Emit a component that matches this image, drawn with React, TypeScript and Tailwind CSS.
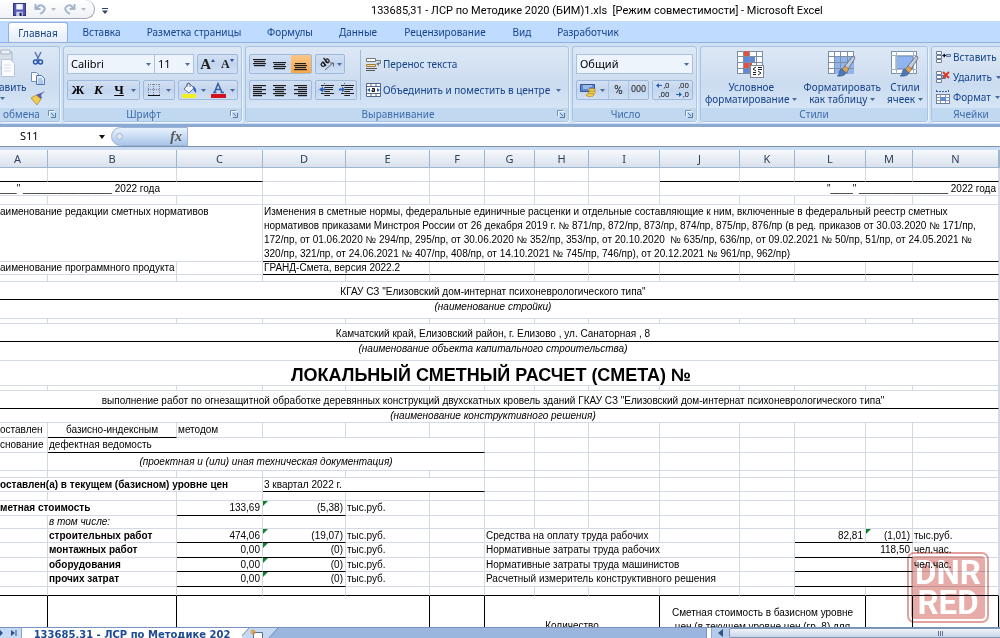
import React from "react";

const box = "flex rounded-[2px] border border-[#9db9dc] bg-gradient-to-b from-[#d3e0f2] via-[#c3d5ee] to-[#cfe0f5]";
const ui = "font-['Noto_Sans',sans-serif]";

function Arrow({ className = "" }: { className?: string }) {
  return (
    <svg viewBox="0 0 5 3" className={"h-[3px] w-[5px] shrink-0 " + className} aria-hidden="true">
      <path d="M0 0h5L2.500 3z" fill="#4a6c9c" />
    </svg>
  );
}

function Launcher() {
  return (
    <button aria-label="Параметры" className="absolute right-[3px] bottom-[3px] h-2 w-2">
      <svg viewBox="0 0 8 8" className="h-2 w-2">
        <path d="M1.500 7V1.500H7" fill="none" stroke="#fff" strokeOpacity=".8" />
        <path d="M.5 6V.5H6" fill="none" stroke="#7590b5" />
        <path d="M3 3l3 3M7.500 3v4.500H3" fill="none" stroke="#58759f" />
      </svg>
    </button>
  );
}

type GroupProps = { label: string; width: string; labelPad?: string; launcher?: boolean; children: React.ReactNode };

function Group({ label, width, labelPad = "", launcher, children }: GroupProps) {
  return (
    <section className={"relative flex shrink-0 flex-col overflow-hidden rounded-[3px] border border-[#a9c3e2] bg-gradient-to-b from-[#dde8f5] via-[#ccdcf0] to-[#dae9fa] shadow-[1px_1px_0_#eef5fd] " + width}>
      <div className="min-h-0 flex-1">{children}</div>
      <h2 className={"h-[13px] bg-[#c1d8f1] text-center text-[10px] leading-[13px] text-[#3f6cab] " + labelPad}>{label}</h2>
      {launcher && <Launcher />}
    </section>
  );
}

function Lines({ rows }: { rows: [number, number, number][] }) {
  return (
    <svg viewBox="0 0 14 13" className="h-[13px] w-[14px]" aria-hidden="true">
      {rows.map(([x, y, w]) => (
        <g key={y}>
          <rect x={x} y={y} width={w} height="1" fill="#1c1c1c" />
          <rect x={x} y={y + 1} width={w} height="1" fill="#5d6675" fillOpacity=".35" />
        </g>
      ))}
    </svg>
  );
}

const topLines: [number, number, number][] = [[0, 1, 13], [1, 3, 11], [0, 5, 13], [1, 7, 11]];
const midLines: [number, number, number][] = [[0, 4, 13], [1, 6, 11], [0, 8, 13], [1, 10, 11]];
const lowLines: [number, number, number][] = [[1, 5, 11], [0, 7, 13], [1, 9, 11], [0, 11, 13]];
const leftLines: [number, number, number][] = [[0, 1, 13], [0, 3, 9], [0, 5, 13], [0, 7, 9], [0, 9, 13], [0, 11, 9]];
const centerLines: [number, number, number][] = [[0, 1, 13], [2, 3, 9], [0, 5, 13], [2, 7, 9], [0, 9, 13], [2, 11, 9]];
const rightLines: [number, number, number][] = [[0, 1, 13], [4, 3, 9], [0, 5, 13], [4, 7, 9], [0, 9, 13], [4, 11, 9]];

function Indent({ out }: { out?: boolean }) {
  return (
    <svg viewBox="0 0 15 14" className="h-[14px] w-[15px]" aria-hidden="true">
      <path d="M2 2.500h13M6 4.500h8M6 6.500h8M6 8.500h5M2 10.500h13M6 12.500h5" stroke="#222" fill="none" />
      <path d={out ? "M0 6.500l4-3v2h2v2H4v2z" : "M6 6.500l-3-3v2H0v2h3v2z"} fill="#2d62b8" />
      <path d="M5.500 0v14" stroke="#555" strokeDasharray="1 1" />
    </svg>
  );
}

function Brush({ x, y }: { x: number; y: number }) {
  return (
    <g transform={"translate(" + x + " " + y + ")"}>
      <path d="M16 0q3 0 1 4L11 13l-4-2z" fill="#c3ccd9" stroke="#566277" strokeWidth=".8" />
      <path d="M8 10l4 3-3 4-4-3z" fill="#d9a45c" stroke="#7d5c30" strokeWidth=".6" />
      <path d="M5 13l4 4q-2 4-9 3 3-2 2-4 1-3 3-3z" fill="#4c76b4" stroke="#3a5681" strokeWidth=".5" />
    </g>
  );
}

function GridIcon({ kind }: { kind: "cond" | "table" | "cell" }) {
  return (
    <svg viewBox="0 0 28 28" className="h-7 w-7" aria-hidden="true">
      <rect x=".5" y="1.500" width="25" height="22" fill="#fff" stroke="#7d8ea8" />
      {kind === "cond" && (
        <g>
          <path d="M7 1h6v6H7zM7 12h8v6H7z" fill="#e0523f" />
          <path d="M7 7h11v5H7zM7 18h6v5H7z" fill="#5c87dc" />
        </g>
      )}
      {kind === "table" && <path d="M7 7h19v17H7z" fill="#8fb4ee" />}
      {kind === "cell" ? (
        <g>
          <path d="M5 6h17v13H5z" fill="#8fb4ee" stroke="#6a8bc4" />
          <path d="M5.500 1v23M22.500 1v23M0 5.500h26M0 19.500h26" stroke="#a6b3c6" fill="none" />
        </g>
      ) : (
        <path d="M6.500 1v23M12.500 1v23M19.500 1v23M0 6.500h26M0 12.500h26M0 18.500h26" stroke="#7d8ea8" fill="none" />
      )}
      {kind === "cond" ? (
        <g>
          <rect x="13.500" y="15.500" width="13" height="12" fill="#fff" stroke="#7c8796" />
          <path d="M19 17l-3 2 3 2M16 22.500h3M16 24.500h3M21 17.500h4M21 19.500h4M21 21l3 2-3 2" stroke="#222" fill="none" />
        </g>
      ) : (
        <Brush x={9} y={6} />
      )}
    </svg>
  );
}

function CellsIcon({ kind }: { kind: "insert" | "delete" | "format" }) {
  return (
    <svg viewBox="0 0 15 14" className="h-[14px] w-[15px] shrink-0" aria-hidden="true">
      {kind === "format" ? (
        <g>
          <path d="M0 1.500h13M.5 0v3M12.500 0v3" stroke="#3a5f99" fill="none" strokeDasharray="2 1" />
          <rect x=".5" y="4.500" width="13" height="9" fill="#fff" stroke="#6d7f99" />
          <path d="M4.500 4v9M9.500 4v9M0 7.500h14M0 10.500h14" stroke="#8796ad" />
          <rect x="5" y="7" width="5" height="4" fill="#5d8bdd" />
        </g>
      ) : (
        <g>
          <path d="M.5 1.500h5v3h-5zM.5 9.500h5v3h-5zM.5 5.500h5v3h-5z" fill="#fff" stroke="#6d7f99" />
          {kind === "insert" ? (
            <g>
              <path d="M6 5.500l3-2v1.500h2v1H9v1.500z" fill="#111" />
              <path d="M10.500 4.500h4v2h-4z" fill="#b8cff2" stroke="#5878ab" />
            </g>
          ) : (
            <g>
              <path d="M5.500 5.500h4v3h-4z" fill="#8fb4ee" stroke="#5878ab" />
              <path d="M7 2l6 6M13 2L7 8" stroke="#dd3a22" strokeWidth="2" />
            </g>
          )}
        </g>
      )}
    </svg>
  );
}

function TitleBar() {
  return (
    <header className="relative flex h-[21px] shrink-0 items-center bg-white">
      <div className="-ml-2 flex h-[19px] w-[103px] items-center self-start rounded-r-full border border-t-0 border-[#a0a6b0] bg-gradient-to-b from-white to-[#eef1f6] pl-5">
        <button aria-label="Сохранить" className="h-[13px] w-[13px]">
          <svg viewBox="0 0 12 12" className="h-[13px] w-[13px]">
            <path d="M.5.500h11v11H.5z" fill="#5558b8" stroke="#34367f" />
            <path d="M3 1h6v5H3z" fill="#f4f6ff" />
            <path d="M3 8h6v4H3z" fill="#c9cfe6" />
            <path d="M6 9h2v3H6z" fill="#23245f" />
          </svg>
        </button>
        <button aria-label="Отменить" className="ml-2 flex items-center gap-[5px]">
          <svg viewBox="0 0 12 12" className="h-3 w-3">
            <path d="M1.500 1v5h5M2.500 5.500Q6 0 9.500 3.500T6 11" fill="none" stroke="#9fb2d0" strokeWidth="2" />
          </svg>
          <svg viewBox="0 0 5 3" className="h-[3px] w-[5px]"><path d="M0 0h5L2.500 3z" fill="#b4bcc9" /></svg>
        </button>
        <button aria-label="Вернуть" className="ml-2 flex items-center gap-[5px]">
          <svg viewBox="0 0 12 12" className="h-3 w-3">
            <path d="M10.500 1v5h-5M9.500 5.500Q6 0 2.500 3.500T6 11" fill="none" stroke="#a7b6cd" strokeWidth="2" />
          </svg>
          <svg viewBox="0 0 5 3" className="h-[3px] w-[5px]"><path d="M0 0h5L2.500 3z" fill="#b4bcc9" /></svg>
        </button>
      </div>
      <button aria-label="Настройка панели" className="ml-[7px] h-[6px] w-[6px]">
        <svg viewBox="0 0 6 6" className="h-[6px] w-[6px]"><path d="M0 0h6v1H0zM0 2.500h6L3 6z" fill="#2c4468" /></svg>
      </button>
      <h1 className="min-w-0 flex-1 pl-[263px] font-['Roboto',sans-serif] text-[11px] leading-5 whitespace-pre text-black">133685,31 - ЛСР по Методике 2020 (БИМ)1.xls  [Режим совместимости] - Microsoft Excel</h1>
    </header>
  );
}

const tabs: [string, string][] = [
  ["Главная", "w-[60px]"],
  ["Вставка", "w-[67px]"],
  ["Разметка страницы", "w-[118px]"],
  ["Формулы", "w-[74px]"],
  ["Данные", "w-[62px]"],
  ["Рецензирование", "w-[112px]"],
  ["Вид", "w-[42px]"],
  ["Разработчик", "w-[90px]"],
];

function Tabs() {
  return (
    <nav className="flex h-[21px] shrink-0 items-end bg-[#bfdbff] pl-2">
      {tabs.map(([t, w], i) => (
        <button
          key={t}
          className={
            "shrink-0 text-center text-[10px] leading-[18px] whitespace-nowrap text-[#15428b] " + w +
            (i === 0 ? " h-5 rounded-t-[3px] border border-b-0 border-[#8fb0dc] bg-gradient-to-b from-white to-[#e3ecf8]" : " h-5")
          }
        >
          {t}
        </button>
      ))}
    </nav>
  );
}

function Ribbon() {
  const btn = "flex items-center justify-center";
  const field = "flex items-center justify-between border border-[#abc1de] bg-[#eef4fc] px-[3px] text-[11px] text-black";
  return (
    <div className="flex h-[82px] shrink-0 gap-[3px] overflow-hidden border-t border-[#8db2e3] bg-[#cfe0f5] pt-[3px] pb-[2px] text-[#15428b]">
      <Group label="обмена" width="w-[61px] -ml-px border-l-0" labelPad="pr-[15px]" launcher>
        <div className="flex h-full justify-between pr-[14px]">
          <button className="flex flex-col items-start text-[10px] leading-3">
            <svg viewBox="0 0 16 32" className="mb-[2px] h-8 w-4" aria-hidden="true">
              <path d="M0 5h13v16H0z" fill="#d9dfe8" stroke="#a9b5c7" />
              <path d="M2 3h9v4H2z" fill="#eef2f7" stroke="#a9b5c7" />
              <path d="M2.500 12.500h9l4 4v13h-13z" fill="#fafcff" stroke="#b8c4d8" />
              <path d="M5 18h7M5 21h7M5 24h7" stroke="#d2dbe8" />
            </svg>
            авить
            <Arrow className="mt-[4px] ml-px" />
          </button>
          <div className="flex flex-col items-center gap-[6px] pt-1">
            <button aria-label="Вырезать">
              <svg viewBox="0 0 14 14" className="h-[14px] w-[14px]">
                <path d="M4 1l4 8M10 1L6 9" stroke="#5c79ae" strokeWidth="1.500" />
                <circle cx="4.500" cy="11" r="2" fill="none" stroke="#2b57ad" strokeWidth="1.500" />
                <circle cx="9.500" cy="11" r="2" fill="none" stroke="#2b57ad" strokeWidth="1.500" />
              </svg>
            </button>
            <button aria-label="Копировать">
              <svg viewBox="0 0 14 14" className="h-[14px] w-[14px]">
                <path d="M.5 1.500h5l3 3v6h-8z" fill="#fff" stroke="#6f8dbf" />
                <path d="M5.500 4.500h5l3 3v6h-8z" fill="#e4eefc" stroke="#4f76b5" />
                <path d="M7 8h4M7 10h5M7 12h5" stroke="#7ea0d8" />
              </svg>
            </button>
            <button aria-label="Формат по образцу">
              <svg viewBox="0 0 14 14" className="h-[14px] w-[14px]">
                <path d="M14 0l-4 4 1 3-2 1-4-4 2-1 3-1z" fill="#5262a5" />
                <path d="M5 4l5 4-4 6-6-7z" fill="#f0cb55" stroke="#a5832c" strokeWidth=".7" />
              </svg>
            </button>
          </div>
        </div>
      </Group>

      <Group label="Шрифт" width="w-[179px]" labelPad="pr-[18px]" launcher>
        <div className="flex flex-col gap-[6px] px-[3px] pt-[7px]">
          <div className="flex h-5 gap-[3px]">
            <div className="flex">
              <button className={field + " w-[88px]"}>Calibri<Arrow /></button>
              <button className={field + " -ml-px w-10"}>11<Arrow /></button>
            </div>
            <div className={box + " flex-1 font-['Liberation_Serif',serif] font-bold text-[#222]"}>
              <button className={btn + " flex-1 text-[15px]"} aria-label="Увеличить размер">
                A<svg viewBox="0 0 4 3" className="mb-2 h-[3px] w-1"><path d="M0 3h4L2 0z" fill="#2450a0" /></svg>
              </button>
              <button className={btn + " flex-1 text-[12px]"} aria-label="Уменьшить размер">
                A<svg viewBox="0 0 4 3" className="mb-2 h-[3px] w-1"><path d="M0 0h4L2 3z" fill="#2450a0" /></svg>
              </button>
            </div>
          </div>
          <div className="flex h-5 gap-[3px]">
            <div className={box + " w-[73px] items-center font-['Liberation_Serif',serif] text-[13px] font-bold text-black"}>
              <button className="w-5">Ж</button>
              <button className="w-[21px] italic">К</button>
              <button className="w-5 underline">Ч</button>
              <Arrow className="ml-[2px]" />
            </div>
            <button className={box + " w-8 items-center justify-center gap-[6px]"} aria-label="Границы">
              <svg viewBox="0 0 12 12" className="h-3 w-3">
                <path d="M.5 0v11M5.500 0v11M11.500 0v11M0 .5h12M0 5.500h12" stroke="#7b8798" strokeDasharray="1 1" fill="none" />
                <path d="M0 11.500h12" stroke="#111" />
              </svg>
              <Arrow />
            </button>
            <div className={box + " flex-1"}>
              <button className={btn + " flex-1 gap-1"} aria-label="Цвет заливки">
                <svg viewBox="0 0 15 16" className="h-4 w-[15px]">
                  <path d="M7 1l5 5-5 5-5-4z" fill="#f1f5fb" stroke="#5d7192" />
                  <path d="M5 5V2q1-2 3 0v3" fill="none" stroke="#5d7192" />
                  <path d="M11 4q4 2 3 7-2-1-3-5z" fill="#2e63b9" />
                  <rect y="12" width="14" height="4" fill="#f4ee1e" />
                </svg>
                <Arrow />
              </button>
              <button className={btn + " flex-1 gap-1"} aria-label="Цвет текста">
                <svg viewBox="0 0 15 16" className="h-4 w-[15px]">
                  <path d="M3.500 10.500L7 1.500l4 9M5 7.500h5M2 10.500h3.500M9.500 10.500h3.500" fill="none" stroke="#3b5fa3" strokeWidth="1.500" />
                  <rect y="12" width="15" height="4" fill="#d4121e" />
                </svg>
                <Arrow />
              </button>
            </div>
          </div>
        </div>
      </Group>

      <Group label="Выравнивание" width="w-[324px]" labelPad="pr-[18px]" launcher>
        <div className="flex gap-[5px] px-[3px] pt-[7px]">
          <div className="flex flex-col gap-[6px]">
            <div className="flex h-5 gap-[3px]">
              <div className={box + " w-[63px]"}>
                <button className={btn + " flex-1"} aria-label="По верхнему краю"><Lines rows={topLines} /></button>
                <button className={btn + " flex-1"} aria-label="По середине"><Lines rows={midLines} /></button>
                <button className={btn + " flex-1 bg-gradient-to-b from-[#f9c787] to-[#fba53a]"} aria-label="По нижнему краю"><Lines rows={lowLines} /></button>
              </div>
              <button className={box + " w-[30px] items-center justify-center gap-[2px]"} aria-label="Ориентация">
                <svg viewBox="0 0 16 14" className="h-[14px] w-4">
                  <ellipse cx="4" cy="7.500" rx="1.700" ry="2" fill="none" stroke="#222" strokeWidth="1.300" transform="rotate(-45 4 7.500)" />
                  <path d="M3.500 4.500L7 9" stroke="#222" strokeWidth="1.300" />
                  <path d="M4.500 1L9 6" stroke="#222" strokeWidth="1.300" />
                  <ellipse cx="8.300" cy="3.800" rx="1.700" ry="2" fill="none" stroke="#222" strokeWidth="1.300" transform="rotate(-45 8.300 3.800)" />
                  <path d="M6 13l8-7M11 6h3.500v3.500" fill="none" stroke="#666" />
                </svg>
                <Arrow />
              </button>
            </div>
            <div className="flex h-5 gap-[3px]">
              <div className={box + " w-[63px]"}>
                <button className={btn + " flex-1"} aria-label="По левому краю"><Lines rows={leftLines} /></button>
                <button className={btn + " flex-1"} aria-label="По центру"><Lines rows={centerLines} /></button>
                <button className={btn + " flex-1"} aria-label="По правому краю"><Lines rows={rightLines} /></button>
              </div>
              <div className={box + " w-[42px]"}>
                <button className={btn + " flex-1"} aria-label="Уменьшить отступ"><Indent out /></button>
                <button className={btn + " flex-1"} aria-label="Увеличить отступ"><Indent /></button>
              </div>
            </div>
          </div>
          <div className="-mt-1 -ml-[2px] w-px bg-[#9fbadb]" />
          <div className="flex flex-col gap-[6px] text-[10px] whitespace-nowrap">
            <button className="flex h-5 items-center gap-[2px]">
              <svg viewBox="0 0 15 14" className="h-[14px] w-[15px]" aria-hidden="true">
                <path d="M.5 1.500h9v3h-9z" fill="#fff" stroke="#777" />
                <path d="M10 3.500h4.500v3H11" fill="none" stroke="#777" />
                <path d="M13 5l-3 2 3 2z" fill="#777" />
                <path d="M.5 7.500h9v2h-9z" fill="#f3d9a8" stroke="#a07a3c" />
                <path d="M0 11.500h11M0 13.500h9" stroke="#555" />
              </svg>
              Перенос текста
            </button>
            <button className="flex h-5 items-center gap-[2px]">
              <svg viewBox="0 0 15 14" className="h-[14px] w-[15px]" aria-hidden="true">
                <path d="M.5.500h14v13H.5zM.5 3.500h14M.5 10.500h14M5 .5v3M10 .5v3M5 10v4M10 10v4" fill="#fff" stroke="#53698c" />
                <path d="M1 7l3-2v4zM14 7l-3-2v4z" fill="#2a5db4" />
                <path d="M6 5.500h2.500v3H6V7h2.500" fill="none" stroke="#111" />
              </svg>
              Объединить и поместить в центре
              <Arrow className="ml-1" />
            </button>
          </div>
        </div>
      </Group>

      <Group label="Число" width="w-[125px]" labelPad="pr-[18px]" launcher>
        <div className="flex flex-col gap-[6px] px-[3px] pt-[7px]">
          <button className={field + " h-5"}>Общий<Arrow /></button>
          <div className="flex h-5 gap-[3px] text-[#222]">
            <div className={box + " w-[73px]"}>
              <button className={btn + " w-[31px] gap-1"} aria-label="Денежный формат">
                <svg viewBox="0 0 16 14" className="h-[14px] w-4">
                  <path d="M.5 1.500h14v7H.5z" fill="#5d88cf" stroke="#2f5596" />
                  <path d="M3 3h9M3 5h6" stroke="#dbe7fb" />
                  <ellipse cx="12" cy="7" rx="3.500" ry="1.500" fill="#f6d35a" stroke="#a37a16" strokeWidth=".6" />
                  <ellipse cx="12" cy="9.500" rx="3.500" ry="1.500" fill="#f6d35a" stroke="#a37a16" strokeWidth=".6" />
                  <ellipse cx="10" cy="12" rx="4" ry="1.500" fill="#f6d35a" stroke="#a37a16" strokeWidth=".6" />
                </svg>
                <Arrow />
              </button>
              <button className={btn + " w-5 border-l border-[#aac3e3] font-['Roboto',sans-serif] text-[12px]"}>%</button>
              <button className={btn + " flex-1 border-l border-[#aac3e3] font-['Roboto',sans-serif] text-[9px]"}>000</button>
            </div>
            <div className={box + " flex-1 font-['Roboto',sans-serif] text-[8px] leading-[9px]"}>
              <button className="flex flex-1 flex-col items-end pr-[3px]" aria-label="Увеличить разрядность">
                <span className="flex items-center gap-px"><svg viewBox="0 0 6 5" className="h-[5px] w-[6px]"><path d="M0 2.500L3 0v2h3v1H3v2z" fill="#2a5db4" /></svg>,0</span>
                <span>,00</span>
              </button>
              <button className="flex flex-1 flex-col items-end pr-[3px]" aria-label="Уменьшить разрядность">
                <span>,00</span>
                <span className="flex items-center gap-px"><svg viewBox="0 0 6 5" className="h-[5px] w-[6px]"><path d="M6 2.500L3 0v2H0v1h3v2z" fill="#2a5db4" /></svg>,0</span>
              </button>
            </div>
          </div>
        </div>
      </Group>

      <Group label="Стили" width="w-[228px]">
        <div className="flex justify-between px-1 pt-[3px] text-center text-[10px] leading-3 whitespace-nowrap">
          {([["cond", "Условное", "форматирование"], ["table", "Форматировать", "как таблицу"], ["cell", "Стили", "ячеек"]] as const).map(([k, a, b]) => (
            <button key={k} className="flex flex-col items-center">
              <GridIcon kind={k} />
              <span className="mt-[3px]">{a}</span>
              <span className="flex items-center gap-[3px]">{b}<Arrow /></span>
            </button>
          ))}
        </div>
      </Group>

      <Group label="Ячейки" width="min-w-[84px] flex-1 -mr-2" labelPad="pr-1">
        <div className="flex flex-col items-start px-1 text-[10px] whitespace-nowrap">
          {([["insert", "Вставить"], ["delete", "Удалить"], ["format", "Формат"]] as const).map(([k, t]) => (
            <button key={k} className="flex h-5 items-center gap-[2px]">
              <CellsIcon kind={k} />
              {t}
              <Arrow className="ml-[2px]" />
            </button>
          ))}
        </div>
      </Group>
    </div>
  );
}

function FormulaBar() {
  return (
    <div className="flex h-[26px] shrink-0 flex-col bg-[#c9dcf4]">
      <div className="h-[3px] shrink-0 bg-[#8ba9d3]" />
      <div className="flex h-5 border-b border-[#7d93ad] bg-white">
        <input aria-label="Имя ячейки" defaultValue="S11" className="w-[99px] bg-white pl-5 text-[11px] text-black outline-none" />
        <button aria-label="Список имён" className="flex w-3 items-center">
          <svg viewBox="0 0 6 4" className="h-1 w-[6px]"><path d="M0 0h6L3 4z" fill="#111" /></svg>
        </button>
        <div className="flex w-[77px] items-center justify-between rounded-l-full border border-[#9cb4d6] bg-gradient-to-b from-[#e9f2fd] to-[#a9c5ea] pr-[5px] pl-1">
          <span className="h-[7px] w-[7px] rounded-full border border-[#a9b8cd] bg-[#dde6f3]" />
          <button className="font-['Liberation_Serif',serif] text-[14px] leading-4 font-bold text-[#555] italic">fx</button>
        </div>
        <input aria-label="Строка формул" className="min-w-0 flex-1 bg-white outline-none" />
      </div>
    </div>
  );
}

type Cell = { t?: React.ReactNode; s?: number; c?: string; mark?: boolean };
type Row = { h: string; cells: Cell[] };

const K = "border-b-black ";
const e = (n: number, c = ""): Cell[] => Array.from({ length: n }, () => ({ c }));
const R = "text-right pr-[2px] ";
const L = "pl-px ";
const C = "text-center ";
const W = "text-center pr-3 ";
const T = "text-center pr-3 pt-[3px] ";

const rows: Row[] = [
  { h: "h-[14px]", cells: [...e(3, K), ...e(6), ...e(5, K), {}] },
  { h: "h-[14px]", cells: [{ t: '___" ________________ 2022 года', s: 3 }, ...e(6), { t: '"____" ________________ 2022 года', s: 5, c: R }, {}] },
  { h: "h-[9px]", cells: e(15) },
  { h: "h-14", cells: [
    { t: "аименование редакции сметных нормативов", s: 3, c: "align-top leading-[14px] " },
    { t: (<>Изменения в сметные нормы, федеральные единичные расценки и отдельные составляющие к ним, включенные в федеральный реестр сметных<br />нормативов приказами Минстроя России от 26 декабря 2019 г. № 871/пр, 872/пр, 873/пр, 874/пр, 875/пр, 876/пр (в ред. приказов от 30.03.2020 № 171/пр,<br />172/пр, от 01.06.2020 № 294/пр, 295/пр, от 30.06.2020 № 352/пр, 353/пр, от 20.10.2020  № 635/пр, 636/пр, от 09.02.2021 № 50/пр, 51/пр, от 24.05.2021 №<br />320/пр, 321/пр, от 24.06.2021 № 407/пр, 408/пр, от 14.10.2021 № 745/пр, 746/пр), от 20.12.2021 № 961/пр, 962/пр)</>), s: 11, c: K + L + "leading-[14px] " },
    {},
  ] },
  { h: "h-[13px]", cells: [{ t: "аименование программного продукта", s: 2 }, {}, { t: "ГРАНД-Смета, версия 2022.2", s: 2, c: K + L }, ...e(9, K), {}] },
  { h: "h-[7px]", cells: e(15) },
  { h: "h-[18px]", cells: [{ t: 'КГАУ СЗ "Елизовский дом-интернат психоневрологического типа"', s: 14, c: T + K }, {}] },
  { h: "h-[19px]", cells: [{ t: "(наименование стройки)", s: 14, c: W + "italic align-top leading-[14px] " }, {}] },
  { h: "h-[5px]", cells: e(15) },
  { h: "h-[18px]", cells: [{ t: "Камчатский край, Елизовский район, г. Елизово , ул. Санаторная , 8", s: 14, c: T + K }, {}] },
  { h: "h-[19px]", cells: [{ t: "(наименование объекта капитального строительства)", s: 14, c: W + "italic align-top leading-[14px] " }, {}] },
  { h: "h-[25px]", cells: [{ t: "ЛОКАЛЬНЫЙ СМЕТНЫЙ РАСЧЕТ (СМЕТА) №", s: 14, c: "text-center pr-4 pt-[5px] text-[18px] leading-[19px] font-bold " }, {}] },
  { h: "h-[5px]", cells: e(15) },
  { h: "h-[18px]", cells: [{ t: 'выполнение работ по огнезащитной обработке деревянных конструкций двухскатных кровель зданий ГКАУ СЗ "Елизовский дом-интернат психоневрологического типа"', s: 14, c: T + K }, {}] },
  { h: "h-[14px]", cells: [{ t: "(наименование конструктивного решения)", s: 14, c: W + "italic " }, {}] },
  { h: "h-[15px]", cells: [{ t: "оставлен" }, { t: "базисно-индексным", c: C + K }, { t: "методом", c: L }, ...e(12)] },
  { h: "h-[15px]", cells: [{ t: "снование" }, { t: "дефектная ведомость", s: 5, c: K + L }, ...e(9)] },
  { h: "h-[18px]", cells: [{}, { t: "(проектная и (или) иная техническая документация)", s: 5, c: C + "italic " }, ...e(9)] },
  { h: "h-[7px]", cells: e(15) },
  { h: "h-[14px]", cells: [{ t: "оставлен(а) в текущем (базисном) уровне цен", s: 3, c: "font-bold " }, { t: "3 квартал 2022 г.", s: 3, c: K + L }, ...e(9)] },
  { h: "h-[9px]", cells: e(15) },
  { h: "h-[15px]", cells: [{ t: "метная стоимость", s: 2, c: "font-bold " }, { t: "133,69", c: R + K }, { t: "(5,38)", c: R + K, mark: true }, { t: "тыс.руб.", c: L }, ...e(10)] },
  { h: "h-[13px]", cells: [{}, { t: "в том числе:", c: L + "italic " }, ...e(13)] },
  { h: "h-[14px]", cells: [{}, { t: "строительных работ", c: L + "font-bold " }, { t: "474,06", c: R + K }, { t: "(19,07)", c: R + K, mark: true }, { t: "тыс.руб.", c: L }, {}, { t: "Средства на оплату труда рабочих", s: 3, c: L }, ...e(2), { t: "82,81", c: R + K }, { t: "(1,01)", c: R + K, mark: true }, { t: "тыс.руб.", c: L }, {}] },
  { h: "h-[15px]", cells: [{}, { t: "монтажных работ", c: L + "font-bold " }, { t: "0,00", c: R + K }, { t: "(0)", c: R + K, mark: true }, { t: "тыс.руб.", c: L }, {}, { t: "Нормативные затраты труда рабочих", s: 4, c: L }, {}, { t: "118,50", s: 2, c: R + K }, { t: "чел.час.", c: L }, {}] },
  { h: "h-[14px]", cells: [{}, { t: "оборудования", c: L + "font-bold " }, { t: "0,00", c: R + K }, { t: "(0)", c: R + K, mark: true }, { t: "тыс.руб.", c: L }, {}, { t: "Нормативные затраты труда машинистов", s: 4, c: L }, {}, { s: 2, c: K }, { t: "чел.час.", c: L }, {}] },
  { h: "h-[15px]", cells: [{}, { t: "прочих затрат", c: L + "font-bold " }, { t: "0,00", c: R + K }, { t: "(0)", c: R + K, mark: true }, { t: "тыс.руб.", c: L }, {}, { t: "Расчетный измеритель конструктивного решения", s: 4, c: L }, {}, { s: 2, c: K }, {}, {}] },
  { h: "h-[9px]", cells: [...e(14, K), {}] },
  { h: "h-[46px]", cells: [
    ...e(2, "border-r-black "), { s: 3, c: "border-r-black " }, { c: "border-r-black " },
    { t: "Количество", s: 3, c: C + "border-r-black pt-[15px] " },
    { t: (<>Сметная стоимость в базисном уровне<br />цен (в текущем уровне цен (гр. 8) для</>), s: 3, c: C + "border-r-black align-top pt-[10px] leading-[14px] " },
    { c: "border-r-black " }, { c: "border-r-black " }, {},
  ] },
];

const letters = ["A", "B", "C", "D", "E", "F", "G", "H", "I", "J", "K", "L", "M", "N", ""];
const widths = ["w-[48px]", "w-[129px]", "w-[86px]", "w-[83px]", "w-[84px]", "w-[55px]", "w-[50px]", "w-[54px]", "w-[71px]", "w-[80px]", "w-[55px]", "w-[71px]", "w-[47px]", "w-[86px]", ""];

function Sheet() {
  return (
    <main className="relative min-h-0 flex-1 overflow-hidden bg-white">
      <table className="w-full table-fixed border-separate border-spacing-0 font-['Liberation_Sans',Arial,sans-serif] text-[10px] leading-[12px] text-black">
        <colgroup>
          {widths.map((w, i) => (
            <col key={i} className={w} />
          ))}
        </colgroup>
        <thead>
          <tr className="h-[18px]">
            {letters.map((l, i) => (
              <th
                key={i}
                scope="col"
                className={"border-r border-b border-[#9eb6ce] bg-gradient-to-b from-[#f7f9fc] to-[#d9e1ed] p-0 font-['Noto_Sans',sans-serif] text-[11px] leading-4 font-normal text-[#2c3f59] " + (i === 0 ? "pr-3" : "")}
              >
                {l}
              </th>
            ))}
          </tr>
        </thead>
        <tbody>
          {rows.map((r, i) => (
            <tr key={i} className={r.h}>
              {r.cells.map((c, j) => (
                <td
                  key={j}
                  colSpan={c.s ?? 1}
                  className={
                    "relative border-r border-b p-0 whitespace-pre " +
                    (c.c?.includes("border-r-black") ? "" : "border-r-[#d3dae3] ") +
                    (c.c?.includes("border-b-black") ? "" : "border-b-[#d3dae3] ") +
                    (c.c ?? "")
                  }
                >
                  {c.mark && (
                    <svg viewBox="0 0 5 5" className="absolute top-0 left-0 h-[5px] w-[5px]" aria-hidden="true">
                      <path d="M0 0h5L0 5z" fill="#12802a" />
                    </svg>
                  )}
                  {c.t}
                </td>
              ))}
            </tr>
          ))}
        </tbody>
      </table>
    </main>
  );
}

function Stamp() {
  return (
    <div className="pointer-events-none absolute right-[11px] bottom-[15px] flex h-[71px] w-[82px] items-center justify-center rounded-[7px] border-2 border-[#dc8a84]/80 p-[2px] mix-blend-multiply">
      <div className="flex h-full w-full flex-col items-center justify-center rounded-[4px] bg-[#d05a50]/50 font-['Roboto',sans-serif] text-[33px] leading-[30px] font-bold text-white">
        <span>DNR</span>
        <span>RED</span>
      </div>
    </div>
  );
}

function SheetTabs() {
  return (
    <footer className="flex h-[11px] shrink-0 items-start overflow-hidden border-t border-[#7793bd] bg-[#9ab5de]">
      <div className="flex h-full w-[22px] items-center gap-2 border-r border-[#8ba5cc] bg-[#c7daf3]">
        <svg viewBox="0 0 20 8" className="h-2 w-5" aria-hidden="true">
          <path d="M0 1l3 3-3 3zM11 1l4 3-4 3zM15.500 1h1v6h-1z" fill="#2c518c" />
        </svg>
      </div>
      <button className="w-[220px] bg-white pt-px text-center font-['DejaVu_Sans',sans-serif] text-[10px] leading-3 font-bold whitespace-nowrap text-[#1d4b93]">133685,31 - ЛСР по Методике 202</button>
      <button aria-label="Вставить лист" className="h-full w-10">
        <svg viewBox="0 0 40 11" className="h-[11px] w-10">
          <path d="M0 0h36L26 11H0z" fill="#c5d9f3" />
          <path d="M0 0h7L-3 11z" fill="#fff" />
          <path d="M7 0L-3 11M36 0L26 11" stroke="#6f8cba" fill="none" />
          <path d="M11.500 4.500h9v6h-9z" fill="#fff" stroke="#55709b" />
          <path d="M8 4h6M11 1v6M9 2l4 4M13 2l-4 4" stroke="#e5963a" />
        </svg>
      </button>
      <div className="flex-1" />
      <div className="flex h-full w-[294px] items-stretch border-l border-[#7793bd] bg-[#dbe7f6]">
        <div className="w-[5px] border-r border-[#8ba5cc] bg-white" />
        <button aria-label="Прокрутить влево" className="flex w-[17px] items-center justify-center bg-[#b4cbeb]">
          <svg viewBox="0 0 5 8" className="h-2 w-[5px]"><path d="M5 0v8L0 4z" fill="#33547f" /></svg>
        </button>
        <div className="flex flex-1 items-center justify-center rounded-l-[2px] border border-r-0 border-[#8094b5] bg-gradient-to-b from-[#f0f4fa] to-[#c8d4e6] pl-[152px]">
          <svg viewBox="0 0 6 5" className="h-[5px] w-[6px]"><path d="M.5 0v5M2.500 0v5M4.500 0v5" stroke="#66788f" /></svg>
        </div>
      </div>
    </footer>
  );
}

export default function App() {
  return (
    <div className={"relative flex h-screen flex-col overflow-hidden bg-white " + ui}>
      <TitleBar />
      <Tabs />
      <Ribbon />
      <FormulaBar />
      <Sheet />
      <SheetTabs />
      <Stamp />
    </div>
  );
}
